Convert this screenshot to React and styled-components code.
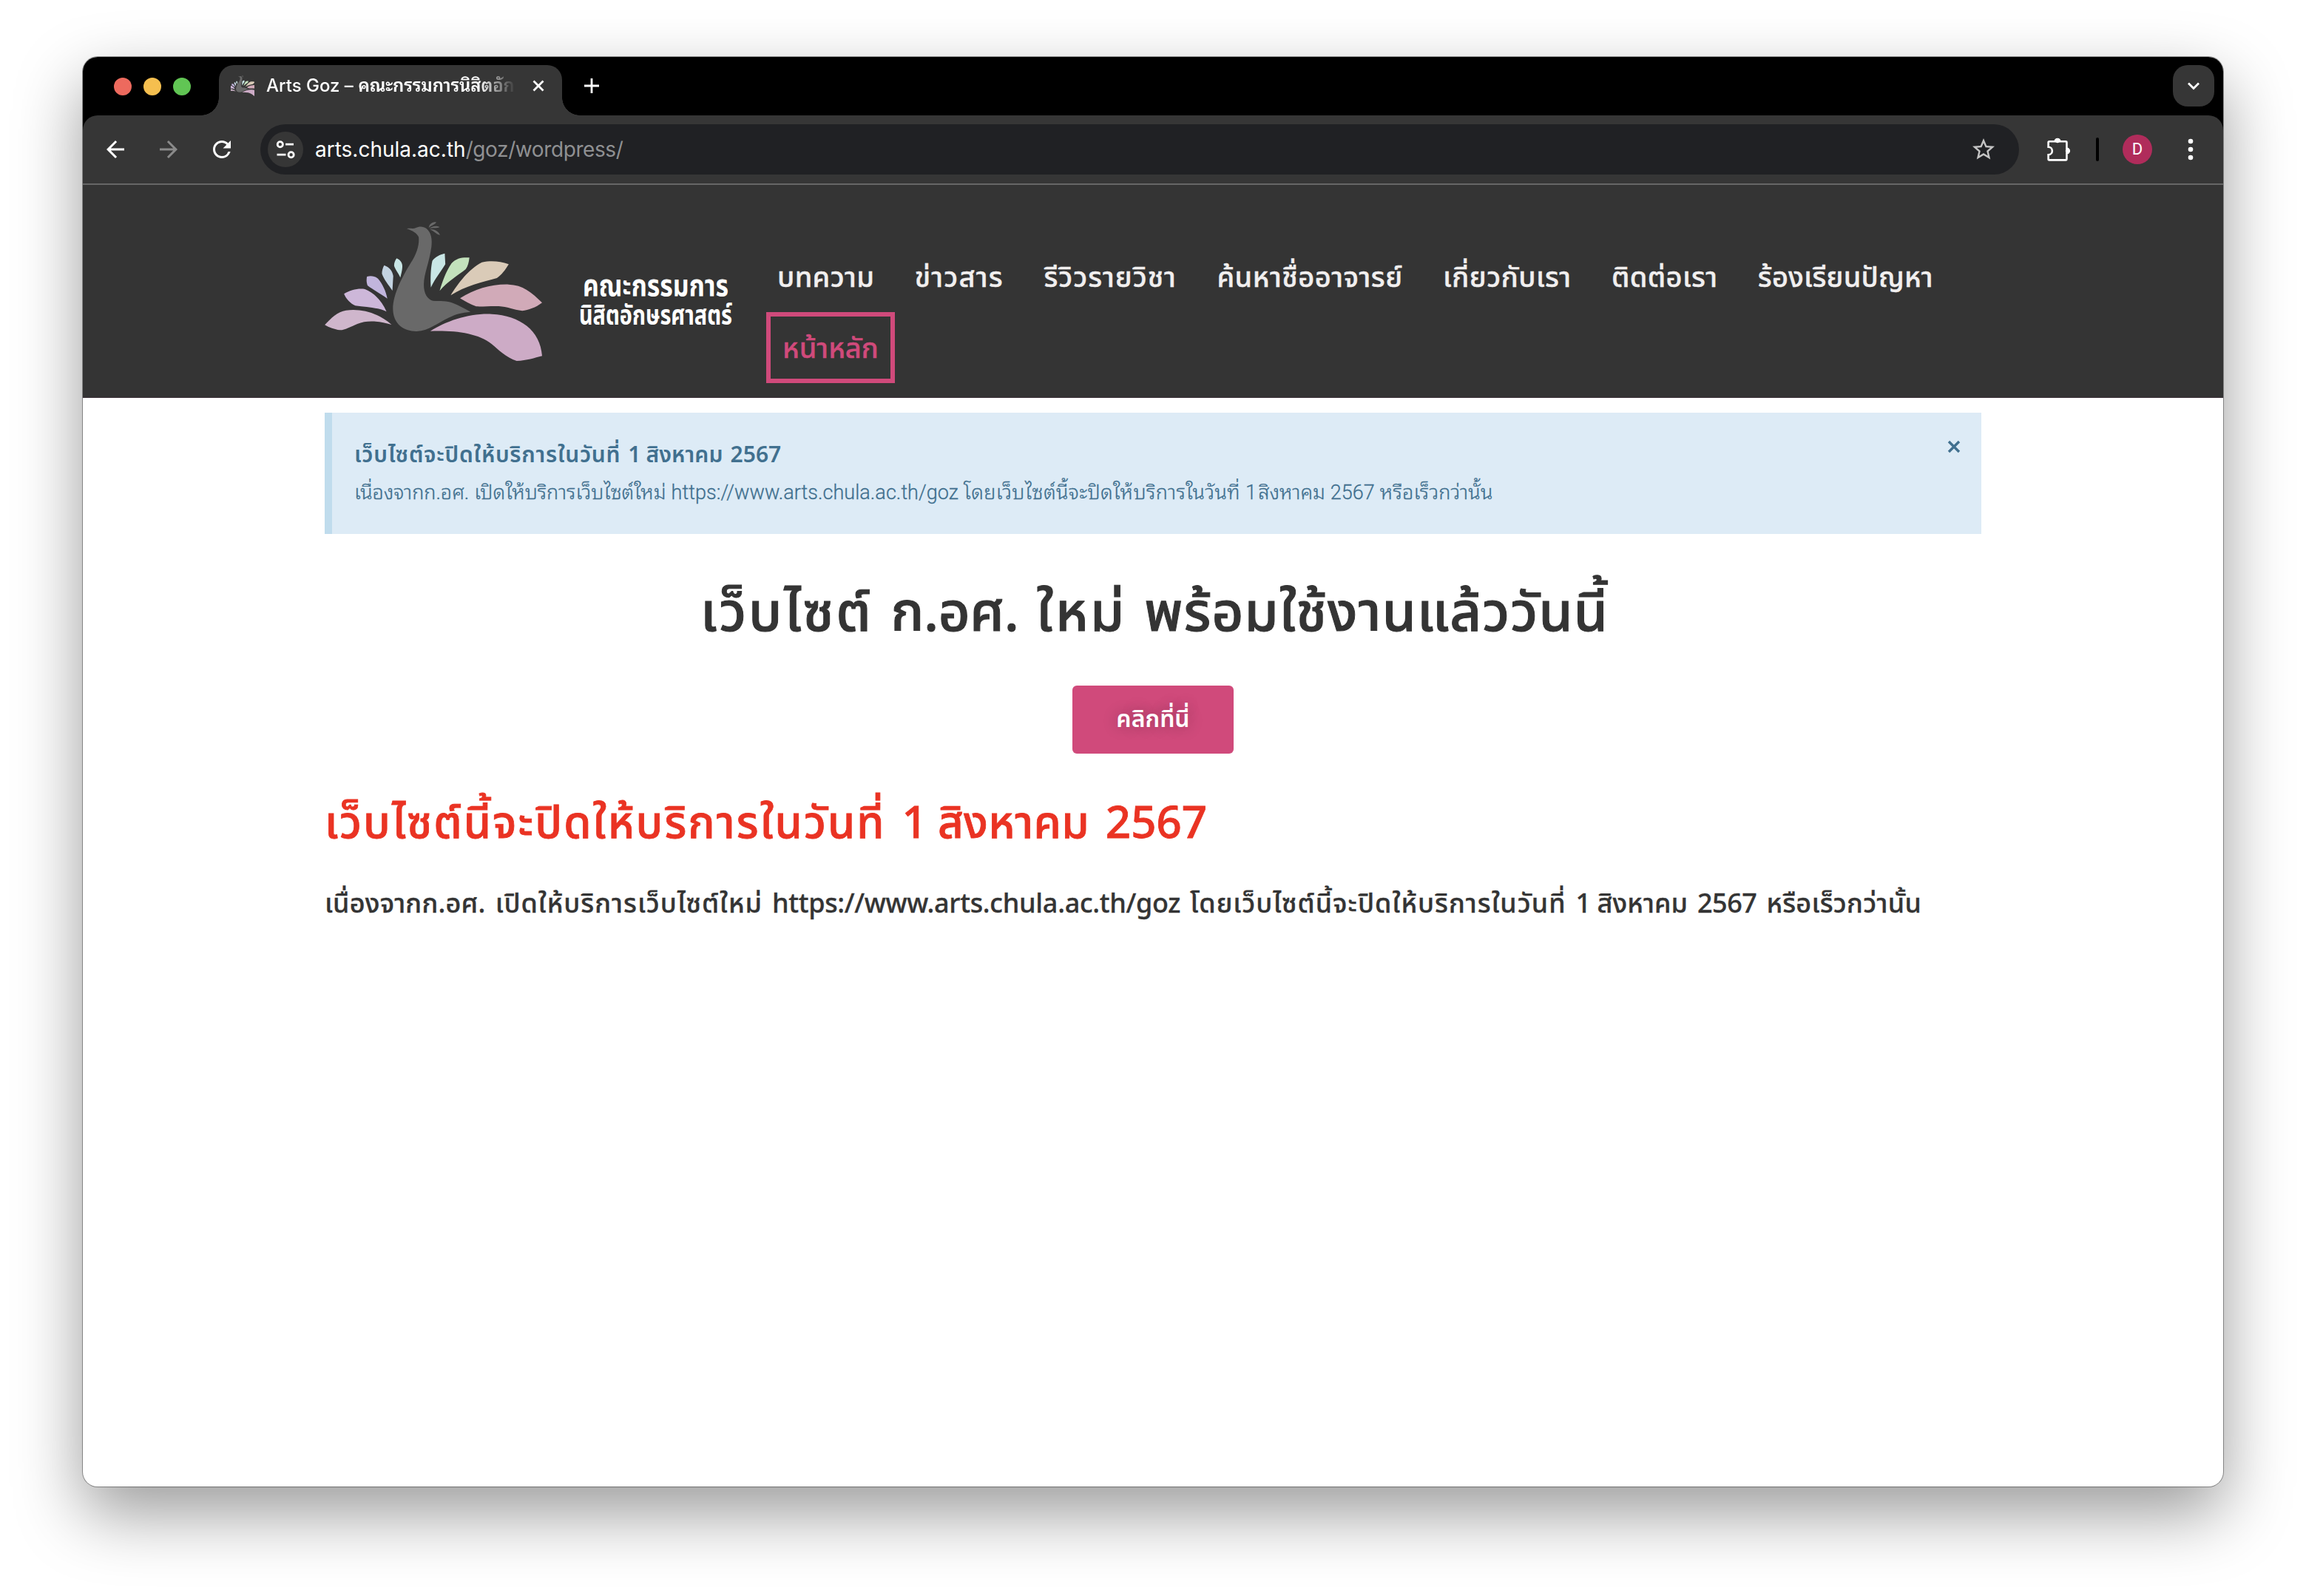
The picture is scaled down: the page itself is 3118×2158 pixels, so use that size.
import React from "react";
import styled, { createGlobalStyle, css } from "styled-components";
import { MdArrowBack, MdArrowForward, MdRefresh, MdStarBorder } from "react-icons/md";

const thai = '"Noto Sans Thai", "Noto Sans", sans-serif';
const thaiLooped = 'Roboto, "Noto Sans Thai Looped", "Noto Sans Thai", sans-serif';
const ui = 'Inter, "Noto Sans Thai Looped", "Noto Sans Thai", sans-serif';

const GlobalStyle = createGlobalStyle`
  * { box-sizing: border-box; }
  body { margin: 0; background: #fff; }
`;

const Desktop = styled.div`
  height: 2158px;
  padding: 77px 112px 148px;
  overflow: hidden;
`;

const Window = styled.div`
  height: 1933px;
  display: flex;
  flex-direction: column;
  border-radius: 20px;
  overflow: hidden;
  background: #fff;
  box-shadow: 0 0 0 1px rgba(0, 0, 0, 0.36), 0 36px 90px rgba(0, 0, 0, 0.4);
`;

/* ---------- browser chrome ---------- */

const TabStrip = styled.div`
  height: 79px;
  flex: none;
  display: flex;
  align-items: flex-end;
  padding: 0 12px 0 42px;
  background: #000;
`;

const Lights = styled.div`
  display: flex;
  gap: 16px;
  padding-bottom: 27px;
`;

const Light = styled.span`
  width: 24px;
  height: 24px;
  border-radius: 50%;
  background: ${(p) => p.$color};
`;

const Tab = styled.div`
  position: relative;
  width: 464px;
  height: 68px;
  margin-left: 38px;
  padding: 0 24px 12px 16px;
  display: flex;
  align-items: center;
  background: #363636;
  border-radius: 20px 20px 0 0;

  &::before,
  &::after {
    content: "";
    position: absolute;
    bottom: 0;
    width: 24px;
    height: 24px;
  }
  &::before {
    left: -24px;
    background: radial-gradient(circle at 0 0, transparent 23.5px, #363636 24px);
  }
  &::after {
    right: -24px;
    background: radial-gradient(circle at 100% 0, transparent 23.5px, #363636 24px);
  }
`;

const TabTitle = styled.span`
  width: 334px;
  margin-left: 16px;
  margin-right: 26px;
  overflow: hidden;
  white-space: nowrap;
  font: 500 24px/40px ${ui};
  color: #fff;
  mask-image: linear-gradient(90deg, #000 86%, transparent 101%);
`;

const TabTitleThai = styled.span`
  font-weight: 600;
  letter-spacing: -0.2px;
`;

const NewTab = styled.span`
  display: flex;
  padding: 0 0 30px 30px;
`;

const TabSearch = styled.span`
  width: 56px;
  height: 56px;
  margin: 0 0 12px auto;
  display: grid;
  place-items: center;
  border-radius: 20px;
  background: #363636;
`;

const ToolbarBack = styled.div`
  flex: none;
  background: #000;
`;

const Toolbar = styled.div`
  height: 94px;
  display: flex;
  align-items: center;
  padding: 0 8px;
  background: #363636;
  border-bottom: 2px solid #666;
  border-radius: 20px 20px 0 0;
`;

const IconButton = styled.span`
  width: 72px;
  height: 72px;
  display: grid;
  place-items: center;
  color: ${(p) => (p.$dim ? "#8a8a8a" : "#fff")};
`;

const Omnibox = styled.div`
  flex: 1;
  height: 68px;
  margin: 0 18px 0 16px;
  padding: 0 30px 0 10px;
  display: flex;
  align-items: center;
  border-radius: 34px;
  background: #202124;
  color: #c4c4c4;
`;

const SiteInfo = styled.span`
  width: 48px;
  height: 48px;
  border-radius: 50%;
  background: #363636;
`;

const Url = styled.span`
  flex: 1;
  margin-left: 16px;
  font: 400 28px/40px ${ui};
  letter-spacing: -0.4px;
  color: #8f9092;
`;

const Host = styled.span`
  letter-spacing: 0;
  color: #fff;
`;

const Divider = styled.span`
  width: 4px;
  height: 32px;
  margin: 0 16px 0 14px;
  border-radius: 2px;
  background: #000;
`;

const Avatar = styled.span`
  width: 40px;
  height: 40px;
  display: grid;
  place-items: center;
  border-radius: 50%;
  background: #b02c5b;
  color: #fff;
  font: 400 22px/40px Roboto, sans-serif;
`;

/* ---------- site ---------- */

const SiteHeader = styled.header`
  height: 288px;
  flex: none;
  display: flex;
  justify-content: center;
  background: #343434;
  border-bottom: 1px solid #392d35;
`;

const HeaderInner = styled.div`
  width: 2240px;
  display: flex;
  align-items: flex-start;
`;

const Brand = styled.svg`
  flex: none;
  width: 551px;
  height: 210px;
  margin: 50px 46px 0 0;
  overflow: visible;
`;

const BrandText = styled.text`
  font-family: ${thai};
  font-size: ${(p) => p.$size}px;
  font-weight: 700;
  fill: #fff;
`;

const Nav = styled.nav`
  flex: 1;
  display: flex;
  flex-wrap: wrap;
  column-gap: 24.5px;
  padding-top: 76px;
`;

const NavItem = styled.a`
  height: 96px;
  padding: 4px 15px 0;
  font: 500 38px/94px ${thai};
  letter-spacing: ${(p) => p.$track || 0}px;
  -webkit-text-stroke: 0.4px currentColor;
  color: #f1efef;
  white-space: nowrap;
  ${(p) =>
    p.$active &&
    css`
      padding: 0 16px;
      line-height: 90px;
      border: 6px solid #d04a7b;
      color: #d04a7b;
    `}
`;

const Main = styled.main`
  width: 2240px;
  margin: 20px auto 0;
  display: flex;
  flex-direction: column;
  align-items: center;
`;

const Notice = styled.section`
  width: 100%;
  height: 164px;
  display: flex;
  justify-content: space-between;
  padding: 32px 28px 28px 30px;
  border-left: 10px solid #c0dced;
  background: #ddebf6;
  color: #41708f;
`;

const Phrase = styled.div`
  display: flex;
  gap: ${(p) => p.$gap}px;
  font-family: ${thai};
  font-size: ${(p) => p.$size}px;
  font-weight: ${(p) => p.$weight || 500};
  line-height: ${(p) => p.$line}px;
  -webkit-text-stroke: ${(p) => p.$stroke || 0}px currentColor;
  white-space: nowrap;
`;

const NoticeBody = styled(Phrase)`
  font-family: ${thaiLooped};
`;

const Title = styled(Phrase)`
  margin-top: 60px;
  padding-left: 4px;
  color: #343434;
`;

const Warning = styled(Phrase)`
  align-self: flex-start;
  margin-top: 46px;
  color: #ea3323;
`;

const Detail = styled(Phrase)`
  align-self: flex-start;
  margin-top: 33px;
  color: #343434;
`;

const Word = styled.span`
  letter-spacing: ${(p) => p.$track}px;
`;

const CloseIcon = styled.svg`
  margin-top: 5px;
`;

const Button = styled.button`
  width: 218px;
  height: 92px;
  margin-top: 49px;
  padding: 0;
  border: 0;
  border-radius: 6px;
  background: #d04a7b;
  color: #fff;
  font: 600 32px/93px ${thai};
  text-shadow: 0 0 20px rgba(0, 0, 0, 0.3);
`;

const feathers = [
  ["#c9e6e5", "M304 208C318 214 326 230 324 245C323 260 320 270 317 286C310 268 298 252 295 238C295 226 299 216 304 208Z"],
  ["#c3d3e1", "M260 236C280 244 290 262 292 280L289 339C275 315 258 292 252 270C252 258 255 246 260 236Z"],
  ["#c1b5dd", "M199 282C215 277 230 282 238 290C254 312 266 340 271 371C248 352 220 335 201 318C197 305 197 294 199 282Z"],
  ["#cdb7d9", "M118 352C140 336 170 328 192 333C222 346 252 380 268 424C240 408 200 406 158 400C140 392 124 370 118 352Z"],
  ["#cfb6cc", "M50 478C72 450 95 424 125 419C180 410 240 430 286 477C240 462 200 458 165 474C140 486 120 500 103 499C85 497 65 488 50 478Z"],
  ["#c9e6e5", "M474 188L476 232C460 262 440 290 425 326C423 290 424 250 430 218C440 202 455 193 474 188Z"],
  ["#c3e2bc", "M561 205C559 225 556 240 548 252C520 278 485 300 456 340C466 300 478 262 498 228C515 206 538 203 561 205Z"],
  ["#dacbb8", "M700 232C688 255 675 275 658 288C610 303 545 320 495 358C520 310 560 250 605 224C640 216 670 220 700 232Z"],
  ["#d1aab8", "M528 370C580 332 640 312 700 314C750 316 780 345 818 388C795 408 770 418 748 421C715 416 695 404 665 402C635 401 610 404 585 403C565 396 545 382 528 370Z"],
  ["#cdabc6", "M423 503C480 462 560 430 640 434C740 440 812 500 818 604C790 612 765 623 728 624C690 610 665 580 640 556C590 510 510 500 423 503Z"],
  ["#696969", "M340 88C350 84 362 90 372 84C382 78 398 76 410 88C426 104 430 130 427 160C420 225 400 270 400 315C400 350 412 374 432 380C460 382 480 378 504 390C525 400 545 412 565 425C535 428 510 435 490 448C450 468 420 502 375 504C330 505 292 475 291 415C290 350 330 270 360 215C378 180 384 150 382 122C376 106 360 96 340 88Z"],
  ["#696969", "M417 84C420 68 430 60 444 61C442 70 428 74 417 84ZM420 88C428 76 445 74 456 81C446 88 432 82 420 88ZM421 90C436 88 454 98 457 114C444 110 432 94 421 90Z"],
];

const Peacock = () => feathers.map(([fill, d]) => <path key={d} fill={fill} d={d} />);

const navItems = [
  ["บทความ", 0.4],
  ["ข่าวสาร", 1.25],
  ["รีวิวรายวิชา", 1],
  ["ค้นหาชื่ออาจารย์", 0.5],
  ["เกี่ยวกับเรา", 0.5],
  ["ติดต่อเรา", 0.4],
  ["ร้องเรียนปัญหา", 0.15],
  ["หน้าหลัก", 0, true],
];

const noticeTitle = [
  ["เว็บไซต์จะปิดให้บริการในวันที่", 0.75],
  ["1", -3],
  ["สิงหาคม", 0.1],
  ["2567", 0],
];

const noticeBody = [
  ["เนื่องจากก.อศ.", 0],
  ["เปิดให้บริการเว็บไซต์ใหม่", 0],
  ["https://www.arts.chula.ac.th/goz", 0.05],
  ["โดยเว็บไซต์นี้จะปิดให้บริการในวันที่", 0.4],
  ["1", -4.5],
  ["สิงหาคม", 0],
  ["2567", 0],
  ["หรือเร็วกว่านั้น", 0.2],
];

const title = [
  ["เว็บไซต์", 2.9],
  ["ก.อศ.", -0.5],
  ["ใหม่", 3],
  ["พร้อมใช้งานแล้ววันนี้", 1.2],
];

const warning = [
  ["เว็บไซต์นี้จะปิดให้บริการในวันที่", 2.06],
  ["1", -8],
  ["สิงหาคม", 0.3],
  ["2567", 0],
];

const detail = [
  ["เนื่องจากก.อศ.", 0.18],
  ["เปิดให้บริการเว็บไซต์ใหม่", 1],
  ["https://www.arts.chula.ac.th/goz", -0.33],
  ["โดยเว็บไซต์นี้จะปิดให้บริการในวันที่", 1.02],
  ["1", -4.6],
  ["สิงหาคม", 0.1],
  ["2567", -0.5],
  ["หรือเร็วกว่านั้น", 0.3],
];

const Words = ({ of }) => of.map(([text, track], i) => <Word key={i} $track={track}>{text}</Word>);

export default function App() {
  return (
    <Desktop>
      <GlobalStyle />
      <Window>
        <TabStrip>
          <Lights>
            <Light $color="#ed6a5e" />
            <Light $color="#f5bf4f" />
            <Light $color="#61c554" />
          </Lights>
          <Tab>
            <svg width="32" height="29" viewBox="178 60 514 565" preserveAspectRatio="none">
              <Peacock />
            </svg>
            <TabTitle>Arts Goz – <TabTitleThai>คณะกรรมการนิสิตอักษรศาสตร์</TabTitleThai></TabTitle>
            <svg width="16" height="16" viewBox="0 0 16 16">
              <path d="M1.5 1.5L14.5 14.5M14.5 1.5L1.5 14.5" stroke="#fff" strokeWidth="2.8" />
            </svg>
          </Tab>
          <NewTab>
            <svg width="20" height="20" viewBox="0 0 20 20">
              <path d="M10 0V20M0 10H20" stroke="#fff" strokeWidth="2.8" />
            </svg>
          </NewTab>
          <TabSearch>
            <svg width="16" height="11" viewBox="0 0 16 11">
              <path d="M1 1.4L8 8.4L15 1.4" fill="none" stroke="#fff" strokeWidth="2.8" />
            </svg>
          </TabSearch>
        </TabStrip>
        <ToolbarBack>
          <Toolbar>
            <IconButton><MdArrowBack size={36} /></IconButton>
            <IconButton $dim><MdArrowForward size={36} /></IconButton>
            <IconButton><MdRefresh size={36} /></IconButton>
            <Omnibox>
              <SiteInfo>
                <svg width="48" height="48" viewBox="0 0 48 48" fill="none" stroke="#fff" strokeWidth="2.8">
                  <circle cx="16.8" cy="17.2" r="3.6" />
                  <path d="M24 17.2H35M12.5 31.2H24.5" />
                  <circle cx="31.6" cy="31.2" r="3.6" />
                </svg>
              </SiteInfo>
              <Url><Host>arts.chula.ac.th</Host>/goz/wordpress/</Url>
              <MdStarBorder size={36} />
            </Omnibox>
            <IconButton>
              <svg width="34" height="34" viewBox="620 368 104 104">
                <path
                  d="M656 387A10 10 0 0 1 676 387H700Q704 387 704 391V416A10 10 0 0 1 704 436V460Q704 464 700 464H632Q628 464 628 460V442A16 16 0 0 0 628 410V391Q628 387 632 387Z"
                  fill="none" stroke="#fff" strokeWidth="8"
                />
                <circle cx="666" cy="384" r="9" fill="#fff" />
                <circle cx="708" cy="426" r="9" fill="#fff" />
              </svg>
            </IconButton>
            <Divider />
            <IconButton><Avatar>D</Avatar></IconButton>
            <IconButton>
              <svg width="8" height="30" viewBox="0 0 8 30" fill="#fff">
                <circle cx="4" cy="4" r="3.3" />
                <circle cx="4" cy="15" r="3.3" />
                <circle cx="4" cy="26" r="3.3" />
              </svg>
            </IconButton>
          </Toolbar>
        </ToolbarBack>

        <SiteHeader>
          <HeaderInner>
            <Brand viewBox="19 20 551 210">
              <g transform="scale(0.38265 0.33333)"><Peacock /></g>
              <BrandText $size={41} x="368" y="120" textLength="197" lengthAdjust="spacingAndGlyphs">คณะกรรมการ</BrandText>
              <BrandText $size={37} x="363" y="159" textLength="207" lengthAdjust="spacingAndGlyphs">นิสิตอักษรศาสตร์</BrandText>
            </Brand>
            <Nav>
              {navItems.map(([text, track, active]) => (
                <NavItem key={text} $track={track} $active={active}>{text}</NavItem>
              ))}
            </Nav>
          </HeaderInner>
        </SiteHeader>

        <Main>
          <Notice>
            <div>
              <Phrase $size={30} $weight={600} $line={52} $gap={10}><Words of={noticeTitle} /></Phrase>
              <NoticeBody $size={27} $weight={300} $stroke={0.3} $line={49} $gap={7}><Words of={noticeBody} /></NoticeBody>
            </div>
            <CloseIcon width="18" height="18" viewBox="0 0 18 18">
              <path d="M2 2L16 16M16 2L2 16" stroke="#41708f" strokeWidth="3.4" />
            </CloseIcon>
          </Notice>
          <Title $size={74} $stroke={1} $line={96} $gap={24}><Words of={title} /></Title>
          <Button>คลิกที่นี่</Button>
          <Warning $size={60} $stroke={0.8} $line={100} $gap={22}><Words of={warning} /></Warning>
          <Detail $size={36} $stroke={0.3} $line={50} $gap={13}><Words of={detail} /></Detail>
        </Main>
      </Window>
    </Desktop>
  );
}
